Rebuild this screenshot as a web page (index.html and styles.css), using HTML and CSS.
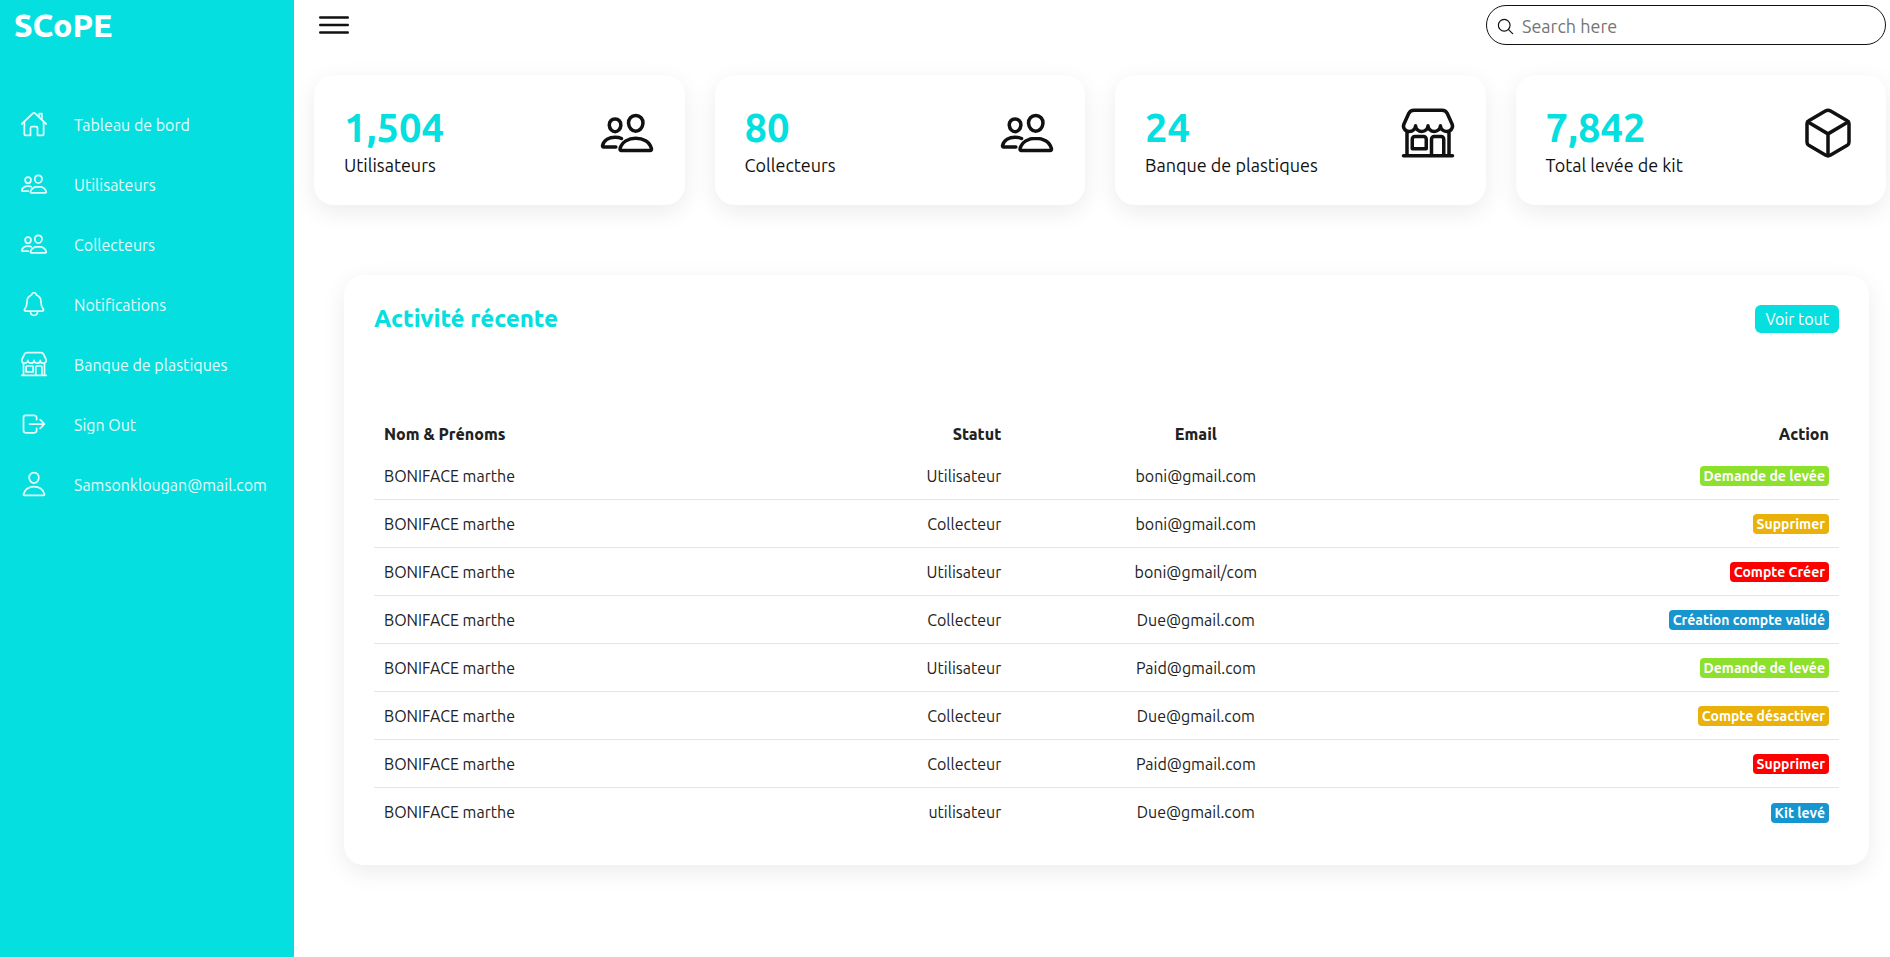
FILE: index.html
```html
<!DOCTYPE html>
<html lang="fr">
<head>
<meta charset="utf-8">
<meta name="viewport" content="width=device-width, initial-scale=1">
<title>SCoPE</title>
<link rel="stylesheet" href="styles.css">
</head>
<body>
<svg class="sprite" aria-hidden="true">
  <symbol id="home" viewBox="0 0 512 512"><path d="M80 212v236a16 16 0 0016 16h96V328a24 24 0 0124-24h80a24 24 0 0124 24v136h96a16 16 0 0016-16V212"/><path d="M480 256L266.89 52c-5-5.28-16.69-5.34-21.78 0L32 256M400 179V64h-48v69"/></symbol>
  <symbol id="people" viewBox="0 0 512 512"><path d="M402 168c-2.93 40.67-33.1 72-66 72s-63.12-31.32-66-72c-3-42.31 26.37-72 66-72s69 30.46 66 72z"/><path d="M336 304c-65.17 0-127.84 32.37-143.54 95.41-2.08 8.34 3.15 16.59 11.72 16.59h263.65c8.57 0 13.77-8.25 11.72-16.59C463.85 335.36 401.18 304 336 304z"/><path d="M200 185.94c-2.34 32.48-26.72 58.06-53 58.06s-50.7-25.57-53-58.06C91.61 152.15 115.34 128 147 128s55.39 24.77 53 57.94z"/><path d="M206 306c-18.05-8.27-37.93-11.45-59-11.45-52 0-102.1 25.85-114.65 76.2-1.65 6.66 2.53 13.25 9.37 13.25H154"/></symbol>
  <symbol id="bell" viewBox="0 0 512 512"><path d="M427.68 351.43C402 320 383.87 304 383.87 217.35 383.87 138 343.35 109.73 310 96c-4.43-1.82-8.6-6-9.95-10.55C294.2 65.54 277.8 48 256 48s-38.21 17.55-44 37.47c-1.35 4.6-5.52 8.71-9.95 10.53-33.39 13.75-73.87 41.92-73.87 121.35C128.13 304 110 320 84.32 351.43 73.68 364.45 83 384 101.61 384h308.88c18.51 0 27.77-19.61 17.19-32.57zM320 384v16a64 64 0 01-128 0v-16"/></symbol>
  <symbol id="store" viewBox="0 0 512 512"><path d="M448 448V240M64 240v208M382.47 48H129.53c-21.79 0-41.47 12-49.93 30.46L36.3 173c-14.58 31.81 9.63 67.85 47.19 69h2c31.4 0 56.85-25.18 56.85-52.23 0 27 25.46 52.23 56.86 52.23s56.8-23.38 56.8-52.23c0 27 25.45 52.23 56.85 52.23s56.86-23.38 56.86-52.23c0 28.85 25.45 52.23 56.85 52.23h1.95c37.56-1.17 61.77-37.21 47.19-69l-43.3-94.54C423.94 60 404.26 48 382.47 48zM32 464h448M136 288h80a24 24 0 0124 24v88h-128v-88a24 24 0 0124-24zM288 464V312a24 24 0 0124-24h64a24 24 0 0124 24v152"/></symbol>
  <symbol id="logout" viewBox="0 0 512 512"><path d="M304 336v40a40 40 0 01-40 40H104a40 40 0 01-40-40V136a40 40 0 0140-40h152c22.09 0 48 17.91 48 40v40M368 336l80-80-80-80M176 256h256"/></symbol>
  <symbol id="person" viewBox="0 0 512 512"><path d="M344 144c-3.92 52.87-44 96-88 96s-84.15-43.12-88-96c-4-55 35-96 88-96s92 42 88 96z"/><path d="M256 304c-87 0-175.3 48-191.64 138.6C62.39 453.52 68.57 464 80 464h352c11.44 0 17.62-10.48 15.65-21.4C431.3 352 343 304 256 304z"/></symbol>
  <symbol id="cube" viewBox="0 0 512 512"><path d="M448 341.37V170.61A32 32 0 00432.11 143l-152-88.46a47.94 47.94 0 00-48.24 0L79.89 143A32 32 0 0064 170.61v170.76A32 32 0 0079.89 369l152 88.46a48 48 0 0048.24 0l152-88.46A32 32 0 00448 341.37z"/><path d="M69 153.99l187 110 187-110M256 463.99v-200"/></symbol>
  <symbol id="menu" viewBox="0 0 512 512"><path d="M80 160h352M80 256h352M80 352h352"/></symbol>
  <symbol id="search" viewBox="0 0 512 512"><path d="M221.09 64a157.09 157.09 0 10157.09 157.09A157.1 157.1 0 00221.09 64z"/><path d="M338.29 338.29L448 448"/></symbol>
</svg>
<div class="layout">
  <aside class="sidebar">
    <a class="brand" href="#">SCoPE</a>
    <nav class="nav">
      <a class="nav-link" href="#"><svg class="icon"><use href="#home"/></svg><span class="nav-text">Tableau de bord</span></a>
      <a class="nav-link" href="#"><svg class="icon"><use href="#people"/></svg><span class="nav-text">Utilisateurs</span></a>
      <a class="nav-link" href="#"><svg class="icon"><use href="#people"/></svg><span class="nav-text">Collecteurs</span></a>
      <a class="nav-link" href="#"><svg class="icon"><use href="#bell"/></svg><span class="nav-text">Notifications</span></a>
      <a class="nav-link" href="#"><svg class="icon"><use href="#store"/></svg><span class="nav-text">Banque de plastiques</span></a>
      <a class="nav-link" href="#"><svg class="icon"><use href="#logout"/></svg><span class="nav-text">Sign Out</span></a>
      <a class="nav-link" href="#"><svg class="icon"><use href="#person"/></svg><span class="nav-text">Samsonklougan@mail.com</span></a>
    </nav>
  </aside>
  <main class="main">
    <header class="topbar">
      <button class="toggle" type="button" aria-label="Menu"><svg class="icon icon-menu"><use href="#menu"/></svg></button>
      <label class="search">
        <svg class="icon icon-search"><use href="#search"/></svg>
        <input class="search-input" type="text" placeholder="Search here" aria-label="Search here">
      </label>
    </header>
    <section class="cards">
      <article class="card"><div><div class="number">1,504</div><div class="card-name">Utilisateurs</div></div><svg class="icon icon-card"><use href="#people"/></svg></article>
      <article class="card"><div><div class="number">80</div><div class="card-name">Collecteurs</div></div><svg class="icon icon-card"><use href="#people"/></svg></article>
      <article class="card"><div><div class="number">24</div><div class="card-name">Banque de plastiques</div></div><svg class="icon icon-card"><use href="#store"/></svg></article>
      <article class="card"><div><div class="number">7,842</div><div class="card-name">Total levée de kit</div></div><svg class="icon icon-card"><use href="#cube"/></svg></article>
    </section>
    <section class="activity">
      <div class="activity-head">
        <h2 class="title">Activité récente</h2>
        <a class="btn" href="#">Voir tout</a>
      </div>
      <table class="table">
        <colgroup><col class="col-name"><col class="col-status"><col class="col-email"><col></colgroup>
        <thead>
          <tr><th>Nom &amp; Prénoms</th><th>Statut</th><th>Email</th><th>Action</th></tr>
        </thead>
        <tbody>
          <tr><td>BONIFACE marthe</td><td>Utilisateur</td><td>boni@gmail.com</td><td><span class="tag green">Demande de levée</span></td></tr>
          <tr><td>BONIFACE marthe</td><td>Collecteur</td><td>boni@gmail.com</td><td><span class="tag amber">Supprimer</span></td></tr>
          <tr><td>BONIFACE marthe</td><td>Utilisateur</td><td>boni@gmail/com</td><td><span class="tag red">Compte Créer</span></td></tr>
          <tr><td>BONIFACE marthe</td><td>Collecteur</td><td>Due@gmail.com</td><td><span class="tag blue">Création compte validé</span></td></tr>
          <tr><td>BONIFACE marthe</td><td>Utilisateur</td><td>Paid@gmail.com</td><td><span class="tag green">Demande de levée</span></td></tr>
          <tr><td>BONIFACE marthe</td><td>Collecteur</td><td>Due@gmail.com</td><td><span class="tag amber">Compte désactiver</span></td></tr>
          <tr><td>BONIFACE marthe</td><td>Collecteur</td><td>Paid@gmail.com</td><td><span class="tag red">Supprimer</span></td></tr>
          <tr><td>BONIFACE marthe</td><td>utilisateur</td><td>Due@gmail.com</td><td><span class="tag blue">Kit levé</span></td></tr>
        </tbody>
      </table>
    </section>
  </main>
</div>
</body>
</html>
```
FILE: styles.css
```css
:root {
  --accent: #05dfe0;
  --ink: #111;
  --text: #222;
}
* { box-sizing: border-box; margin: 0; padding: 0; }
body {
  font-family: Ubuntu, "Noto Sans", sans-serif;
  font-size: 16px;
  color: var(--text);
  background: #fff;
}
a { color: inherit; text-decoration: none; }
.sprite { display: none; }
.icon {
  flex: none;
  display: block;
  width: 28px;
  height: 28px;
  fill: none;
  stroke: currentColor;
  stroke-width: 32;
  stroke-linecap: round;
  stroke-linejoin: round;
}
.layout { display: flex; min-height: 100vh; }

.sidebar { flex: none; width: 294px; background: var(--accent); color: #fff; }
.brand {
  display: block;
  padding: 5px 14px;
  font-size: 32px;
  line-height: 40px;
  font-weight: 800;
}
.nav { padding-top: 44px; }
.nav-link {
  display: flex;
  align-items: center;
  gap: 26px;
  height: 60px;
  padding-left: 20px;
  opacity: 0.9;
}
.nav-text { padding-top: 2px; }

.main { flex: 1; min-width: 0; padding: 0 4px 0 20px; }
.topbar { display: flex; align-items: center; justify-content: space-between; height: 50px; }
.toggle { border: 0; background: none; color: var(--ink); cursor: pointer; }
.icon-menu { width: 40px; height: 40px; }
.search {
  display: flex;
  align-items: center;
  gap: 7px;
  width: 400px;
  height: 40px;
  padding: 2px 9px 0;
  border: 1px solid var(--ink);
  border-radius: 20px;
  color: var(--ink);
}
.icon-search { width: 19px; height: 19px; }
.search-input {
  flex: 1;
  min-width: 0;
  border: 0;
  outline: 0;
  background: none;
  font: inherit;
  font-size: 18px;
}
.search-input::placeholder { color: #757575; }

.cards { display: grid; grid-template-columns: repeat(4, 1fr); gap: 30px; padding-top: 25px; }
.card {
  display: flex;
  justify-content: space-between;
  align-items: flex-start;
  padding: 30px;
  border-radius: 20px;
  background: #fff;
  color: var(--ink);
  box-shadow: 0 7px 25px rgba(0, 0, 0, 0.08);
}
.number { font-size: 40px; line-height: 46px; font-weight: 600; color: var(--accent); }
.card-name { padding-top: 4px; font-size: 18px; line-height: 20px; }
.icon-card { width: 56px; height: 56px; }

.activity {
  margin: 70px 17px 0 30px;
  padding: 30px;
  border-radius: 20px;
  background: #fff;
  box-shadow: 0 7px 25px rgba(0, 0, 0, 0.08);
}
.activity-head { display: flex; justify-content: space-between; align-items: flex-start; }
.title { font-size: 24px; line-height: 28px; font-weight: 800; color: var(--accent); }
.btn {
  padding: 0 10px;
  border-radius: 6px;
  background: var(--accent);
  color: #fff;
  line-height: 28px;
}
.table { width: 100%; margin-top: 84px; border-collapse: collapse; table-layout: fixed; }
.col-name { width: 28%; }
.col-status { width: 15.5%; }
.col-email { width: 25.2%; }
.table th, .table td { padding: 0 10px; text-align: right; }
.table th { height: 34px; font-weight: 800; }
.table td { height: 48px; padding-top: 2px; }
.table th:first-child, .table td:first-child { text-align: left; }
.table th:nth-child(3), .table td:nth-child(3) { text-align: center; }
.table tbody tr { border-bottom: 1px solid rgba(0, 0, 0, 0.1); }
.table tbody tr:last-child { border-bottom: 0; }
.tag {
  display: inline-block;
  padding: 0 4px;
  border-radius: 4px;
  font-size: 14px;
  line-height: 20px;
  font-weight: 600;
  color: #fff;
  vertical-align: middle;
}
.green { background: #8de02c; }
.amber { background: #e9b10a; }
.red { background: #f00; }
.blue { background: #1795ce; }
```
